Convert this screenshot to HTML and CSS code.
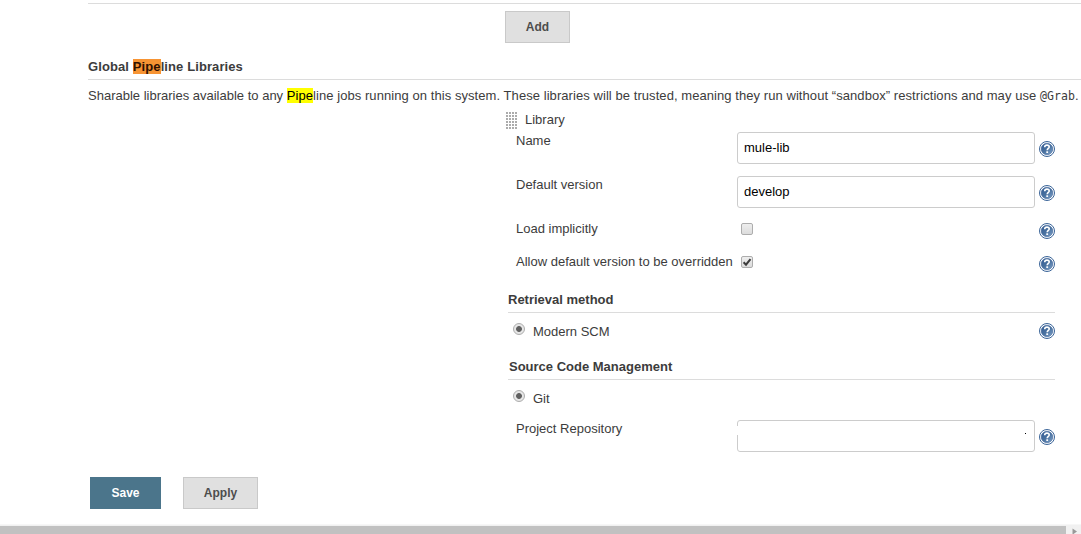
FILE: index.html
```html
<!DOCTYPE html>
<html lang="en">
<head>
<meta charset="utf-8">
<title>Configure System</title>
<link rel="stylesheet" href="styles.css">
</head>
<body>
<svg class="defs" width="0" height="0" aria-hidden="true">
  <defs>
    <linearGradient id="help-fill" x1="0" y1="0" x2="1" y2="1">
      <stop offset="0" stop-color="#315b95"/>
      <stop offset=".5" stop-color="#49719f"/>
      <stop offset="1" stop-color="#7fa3cb"/>
    </linearGradient>
    <symbol id="help" viewBox="0 0 16 16">
      <circle cx="8" cy="8" r="7.5" fill="#fff" stroke="#3a6498" stroke-width="1"/>
      <circle cx="8" cy="8" r="5.8" fill="url(#help-fill)" stroke="#2f5790" stroke-width=".5"/>
      <path d="M5.7 6.2C5.7 4.7 6.700 4.100 8 4.100S10.200 4.800 10.200 5.900C10.200 7.400 8.200 7.500 8.200 9.300" fill="none" stroke="#fff" stroke-width="1.6"/>
      <rect x="7.3" y="10.3" width="1.800" height="1.700" fill="#fff"/>
    </symbol>
  </defs>
</svg>
<main class="page">
  <div class="top-area"><button class="btn btn-add">Add</button></div>
  <h2 class="heading heading-main">Global <mark class="hit-current">Pipe</mark>line Libraries</h2>
  <p class="description"><span class="lead">Sharable libraries available to any </span><mark class="hit">Pipe</mark>line jobs running on this system. These libraries will be trusted, meaning they run without “sandbox” restrictions and may use <code>@Grab</code>.</p>

  <section class="library">
    <div class="library-title"><span class="drag"></span><span>Library</span></div>
    <div class="row row-text">
      <label>Name</label><input class="field" value="mule-lib"><svg class="help"><use href="#help"/></svg>
    </div>
    <div class="row row-text">
      <label>Default version</label><input class="field" value="develop"><svg class="help"><use href="#help"/></svg>
    </div>
    <div class="row row-check">
      <label>Load implicitly</label><span class="checkbox"></span><svg class="help"><use href="#help"/></svg>
    </div>
    <div class="row row-check">
      <label>Allow default version to be overridden</label>
      <span class="checkbox"><svg viewBox="0 0 10 10"><path d="M1.6 5.3 4 7.7 8.5 2.2" fill="none" stroke="#3c3c3c" stroke-width="2"/></svg></span>
      <svg class="help"><use href="#help"/></svg>
    </div>
    <h3 class="heading heading-retrieval">Retrieval method</h3>
    <div class="option"><span class="radio"></span><span>Modern SCM</span><svg class="help"><use href="#help"/></svg></div>
    <h3 class="heading heading-scm">Source Code Management</h3>
    <div class="option"><span class="radio"></span><span>Git</span></div>
    <div class="row row-text">
      <label>Project Repository</label><div class="field field-redacted"><span class="redaction"></span><span class="speck"></span></div><svg class="help"><use href="#help"/></svg>
    </div>
  </section>

  <div class="actions"><button class="btn btn-save">Save</button><button class="btn btn-apply">Apply</button></div>
</main>
<div class="scrollbar"><span class="thumb"></span><svg class="arrow" viewBox="0 0 15 8"><path d="M6.500 2.500v5.500h1l3.500-2.500z" fill="#999"/></svg></div>
</body>
</html>
```
FILE: styles.css
```css
* { box-sizing: border-box; }

body {
  display: flex;
  flex-direction: column;
  height: 534px;
  margin: 0;
  overflow: hidden;
  background: #fff;
  color: #3c3c3c;
  font: 13px/16px "Liberation Sans", Arial, sans-serif;
}

.defs { position: absolute; }

.page { height: 524px; padding: 3px 0 0 88px; }

.top-area {
  height: 56px;
  padding: 7px 0 0 417px;
  border-top: 1px solid #dcdcdc;
}

.btn {
  display: block;
  height: 32px;
  padding: 0;
  border: 1px solid #c9c9c9;
  border-radius: 0;
  background: #e0e0e0;
  color: #4d4d4d;
  font: bold 12px/16px "Liberation Sans", Arial, sans-serif;
}
.btn-add { width: 65px; }
.btn-save { width: 71px; border-color: #4b758b; background: #4b758b; color: #fff; }
.btn-apply { width: 75px; }

.heading {
  margin: 0;
  border-bottom: 1px solid #dcdcdc;
  font-size: 13px;
  line-height: 16px;
}
.heading-main { height: 21px; letter-spacing: .1px; }

mark { color: #000; }
.hit-current { background: #f79433; color: #301000; }
.hit { background: #ff0; }

.description {
  height: 24px;
  margin: 0;
  padding-top: 8px;
  letter-spacing: .065px;
  white-space: nowrap;
}
.lead { letter-spacing: 0; }
.description code {
  font: 12px/16px "DejaVu Sans Mono", monospace;
  font-size: 11.500px;
}

.library { width: 550px; padding: 8px 0 0; margin-left: 417px; }

.library-title { display: flex; gap: 7px; height: 20px; padding-left: 1px; }
.drag {
  width: 12px;
  height: 17px;
  background: radial-gradient(circle at 1px 1px, #aaa .7px, transparent 1.1px) 0 0 / 3px 3px;
}

.row {
  display: grid;
  column-gap: 4px;
  padding-left: 11px;
}
.row label { padding-top: 1px; white-space: nowrap; }
.row-text { height: 44px; grid-template-columns: 217px 298px 16px; }
.row-text .help { margin-top: 9px; }
.row-check { height: 33px; grid-template-columns: 221px 294px 16px; }
.row-check .checkbox { margin-top: 3px; }
.row-check .help { margin-top: 3px; }

.field {
  width: 298px;
  height: 32px;
  padding: 0 6px 2px;
  border: 1px solid #ccc;
  border-radius: 3px;
  background: #fff;
  color: #000;
  font: 13px/16px "Liberation Sans", Arial, sans-serif;
}
.help { display: block; width: 16px; height: 16px; }

.checkbox {
  display: block;
  width: 12px;
  height: 12px;
  border: 1px solid #adadad;
  border-radius: 2px;
  background: linear-gradient(#eee, #dcdcdc);
}
.checkbox svg { display: block; width: 10px; height: 10px; }

.heading-retrieval { height: 27px; margin-left: 3px; padding-top: 6px; }
.heading-scm { height: 27px; margin-left: 3px; padding: 6px 0 0 1px; }

.option {
  display: grid;
  grid-template-columns: 12px 499px 16px;
  column-gap: 8px;
  height: 40px;
  padding: 10px 0 0 8px;
}
.option span + span { padding-top: 1px; }
.option .help { margin-left: -1px; }
.radio {
  width: 12px;
  height: 12px;
  border: 1px solid #adadad;
  border-radius: 50%;
  background: radial-gradient(circle, #606060 2.5px, #e6e6e6 3.3px);
}

.field-redacted { position: relative; }
.redaction { position: absolute; left: -1px; top: 5px; width: 2px; height: 9px; background: #fff; }
.speck { position: absolute; right: 8px; top: 12px; width: 1px; height: 1px; background: #000; }

.actions { display: flex; gap: 22px; padding: 13px 0 0 2px; }

.scrollbar {
  display: flex;
  height: 10px;
  border-top: 1px solid #f7f7f7;
  background: #f1f1f1;
}
.thumb { width: 1066px; height: 8px; margin-top: 1px; background: #c1c1c1; }
.arrow { width: 15px; height: 8px; margin-top: 1px; }
```
